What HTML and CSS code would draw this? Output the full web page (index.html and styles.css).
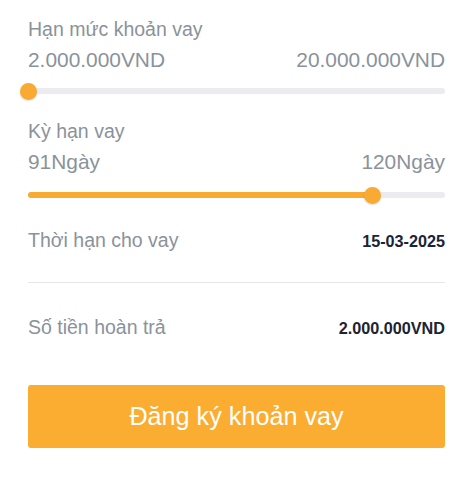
FILE: index.html
```html
<!DOCTYPE html>
<html lang="vi">
<head>
<meta charset="utf-8">
<link rel="stylesheet" href="styles.css">
</head>
<body>
<main class="loan">
  <section class="range-block first">
    <div class="label">Hạn mức khoản vay</div>
    <div class="range-values"><span>2.000.000VND</span><span>20.000.000VND</span></div>
    <div class="slider">
      <div class="fill" style="width:0%"></div>
      <div class="thumb" style="left:0%"></div>
    </div>
  </section>
  <section class="range-block second">
    <div class="label">Kỳ hạn vay</div>
    <div class="range-values"><span>91Ngày</span><span>120Ngày</span></div>
    <div class="slider">
      <div class="fill" style="width:82.5%"></div>
      <div class="thumb" style="left:82.5%"></div>
    </div>
  </section>
  <div class="info-row date-row">
    <span class="info-label">Thời hạn cho vay</span>
    <span class="info-value">15-03-2025</span>
  </div>
  <hr class="divider">
  <div class="info-row amount-row">
    <span class="info-label">Số tiền hoàn trả</span>
    <span class="info-value">2.000.000VND</span>
  </div>
  <button class="submit" type="button">Đăng ký khoản vay</button>
</main>
</body>
</html>
```

FILE: styles.css
```css
html, body {
  margin: 0;
  padding: 0;
  background: #ffffff;
}
body {
  font-family: "Liberation Sans", Arial, sans-serif;
}
.loan {
  display: flex;
  flex-direction: column;
  padding: 17px 28px 0 28px;
}
.label {
  font-size: 19.5px;
  line-height: 24px;
  color: #8a929b;
}
.range-values {
  display: flex;
  justify-content: space-between;
  margin-top: 7px;
  font-size: 20.9px;
  line-height: 24px;
  color: #8a929b;
}
.slider {
  position: relative;
  height: 6px;
  border-radius: 3px;
  background: #ececf0;
  margin-top: 16px;
}
.fill {
  height: 100%;
  border-radius: 3px;
  background: #f9aa33;
}
.thumb {
  position: absolute;
  top: 50%;
  width: 17px;
  height: 17px;
  margin-left: -8.5px;
  margin-top: -8.5px;
  border-radius: 50%;
  background: #f9aa33;
  box-shadow: 0 1px 2px rgba(0,0,0,0.15);
}
.second {
  margin-top: 25px;
}
.second .range-values {
  margin-top: 7px;
}
.second .slider {
  margin-top: 18px;
}
.info-row {
  display: flex;
  justify-content: space-between;
  align-items: baseline;
}
.info-label {
  font-size: 19.5px;
  line-height: 24px;
  color: #8a929b;
}
.info-value {
  font-size: 16.2px;
  font-weight: bold;
  color: #1a2434;
}
.date-row {
  margin-top: 30px;
}
.divider {
  border: 0;
  border-top: 1px solid #e6e6e8;
  margin: 30px 0 0 0;
}
.amount-row {
  margin-top: 32px;
}
.submit {
  margin-top: 46px;
  height: 63px;
  border: 0;
  border-radius: 3px;
  background: #fbad32;
  color: #ffffff;
  font-family: "Liberation Sans", Arial, sans-serif;
  font-size: 25.2px;
  padding: 0;
}
```
